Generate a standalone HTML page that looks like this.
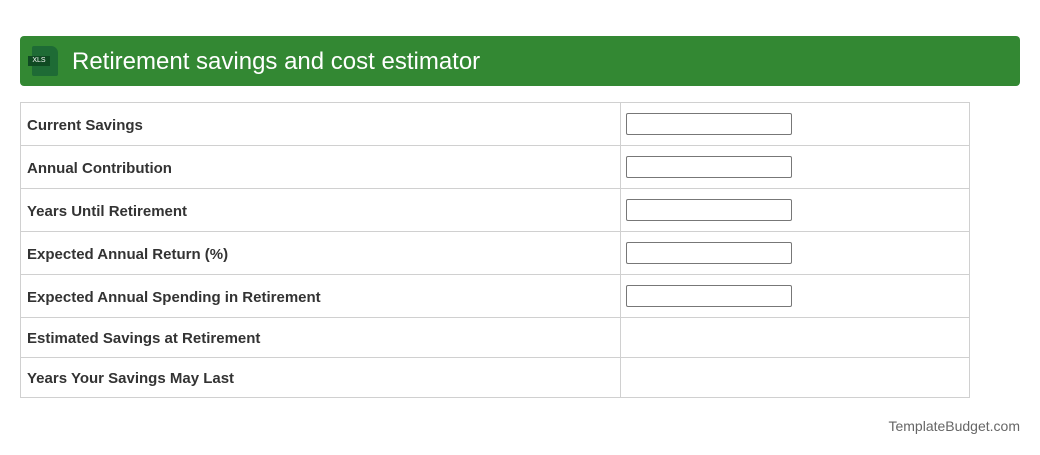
<!DOCTYPE html>
<html><head><style>
body{margin:0;background:#fff;font-family:"Liberation Sans",Arial,sans-serif;width:1040px;height:455px;position:relative;overflow:hidden}
.hdr{position:absolute;left:20px;top:36px;width:1000px;height:50px;background:#338833;border-radius:4px}
.hdr h1{position:absolute;left:52px;top:1px;margin:0;line-height:50px;font-size:24px;font-weight:normal;color:#fff}
.doc{position:absolute;left:12px;top:10px;width:26px;height:30px;background:#1e6b35;border-radius:2px 7px 2px 2px}
.tag{position:absolute;left:8px;top:20px;width:22px;height:10px;background:#0f4a22;color:#fff;font-size:7px;line-height:10px;text-align:center}
table{position:absolute;left:20px;top:102px;border-collapse:collapse;width:950px}
td{border:1px solid #d0d0d0;padding:2px 6px 0;font-size:15px;font-weight:bold;color:#333}
td.l{width:587px}
tr.i td{height:40px}
tr.o td{height:37px}
.inp{width:164px;height:20px;border:1px solid #777;border-radius:2px;margin-left:-1px;margin-top:-2px}
.ft{position:absolute;right:20px;top:418px;font-size:14px;color:#666}
</style></head><body>
<div class="hdr"><div class="doc"></div><div class="tag">XLS</div><h1>Retirement savings and cost estimator</h1></div>
<table>
<tr class="i"><td class="l">Current Savings</td><td><div class="inp"></div></td></tr>
<tr class="i"><td class="l">Annual Contribution</td><td><div class="inp"></div></td></tr>
<tr class="i"><td class="l">Years Until Retirement</td><td><div class="inp"></div></td></tr>
<tr class="i"><td class="l">Expected Annual Return (%)</td><td><div class="inp"></div></td></tr>
<tr class="i"><td class="l">Expected Annual Spending in Retirement</td><td><div class="inp"></div></td></tr>
<tr class="o"><td class="l">Estimated Savings at Retirement</td><td></td></tr>
<tr class="o"><td class="l">Years Your Savings May Last</td><td></td></tr>
</table>
<div class="ft">TemplateBudget.com</div>
</body></html>
